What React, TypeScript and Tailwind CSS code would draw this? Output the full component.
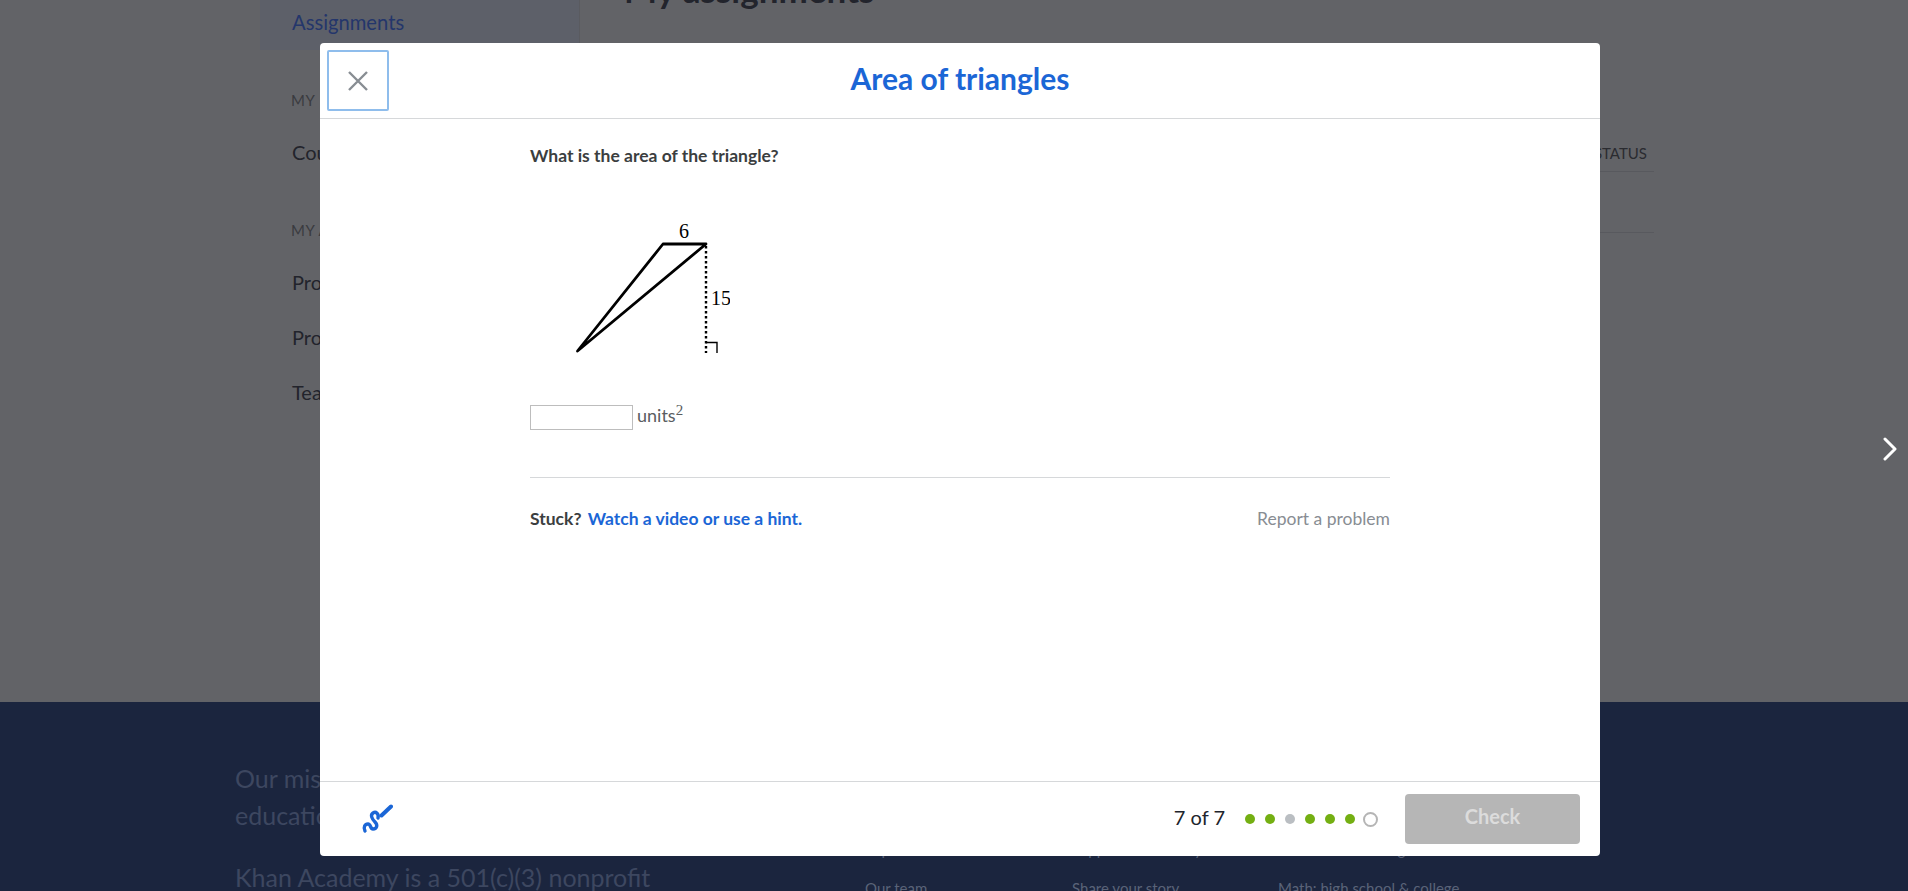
import React from "react";

const font = "font-['Lato','Liberation_Sans',sans-serif]";

const Triangle = () => (
	<svg width="200" height="160" viewBox="0 0 200 160" className="block">
		<path d="M47.5 141 L133 34 L176 34 Z" fill="none" stroke="#000" strokeWidth="2.8" strokeLinejoin="round" />
		<line x1="176" y1="36" x2="176" y2="143" stroke="#000" strokeWidth="2.4" strokeDasharray="2.4 2.6" />
		<path d="M176 132.5 H187 V143" fill="none" stroke="#000" strokeWidth="1.4" />
		<text x="154" y="28" fontSize="20" fontFamily="'Liberation Serif', serif" textAnchor="middle">6</text>
		<text x="181" y="95" fontSize="20" fontFamily="'Liberation Serif', serif">15</text>
	</svg>
);

const Scratchpad = () => (
	<svg width="32" height="32" viewBox="0 0 32 32" fill="none" className="block">
		<path d="M4 28 C2 24 4 21 7 21 C10 21 9 26 12 26 C16 26 17 22 14 19 C11 16 9 12 12 10 C15 8 18 11 17 15" stroke="#1b66d6" strokeWidth="3.4" strokeLinecap="round" strokeLinejoin="round" />
		<path d="M20.5 12.5 L30 3.5" stroke="#1b66d6" strokeWidth="4" strokeLinecap="round" />
	</svg>
);

const Dot = ({ color }: { color: string }) => <span className={`h-[10px] w-[10px] rounded-full ${color}`} />;

export default function App() {
	return (
		<div className={`relative h-[891px] w-[1908px] overflow-hidden bg-[#626367] ${font}`}>
			{/* Page behind the dialog */}
			<div className="flex h-[702px] pl-[260px]">
				<aside className="h-full w-[320px] border-r border-[#5a5b60]">
					<div className="flex h-[50px] items-start bg-[#5d6069] pl-[32px] pt-[9px] text-[20.2px] leading-[26px] text-[#24366b]">Assignments</div>
					<div className="mt-[40px] pl-[31px] text-[15px] leading-[20px] tracking-[0.5px] text-[#3a3b40]">MY</div>
					<div className="mt-[28px] pl-[32px] text-[20px] leading-[28px] text-[#22242c]">Courses</div>
					<div className="mt-[54px] pl-[31px] text-[15px] leading-[20px] tracking-[0.5px] text-[#3a3b40]">MY A</div>
					<div className="mt-[28px] pl-[32px] text-[20px] leading-[28px] text-[#22242c]">Profile</div>
					<div className="mt-[27px] pl-[32px] text-[20px] leading-[28px] text-[#22242c]">Progress</div>
					<div className="mt-[27px] pl-[32px] text-[20px] leading-[28px] text-[#22242c]">Teachers</div>
				</aside>
				<main className="flex-1 pl-[44px] pr-[254px]">
					<h1 className="-mt-[31px] text-[35px] font-bold leading-[40px] text-[#22242c]">My assignments</h1>
					<div className="mt-[125px] flex h-[38px] items-end justify-end border-b border-[#58595e] pb-[8px] pr-[7px] text-[15px] leading-[20px] text-[#2a2b30]">STATUS</div>
					<div className="h-[61px] border-b border-[#58595e]" />
				</main>
			</div>
			<footer className="h-[189px] bg-[#1b253e] pl-[235px] pt-[58px]">
				<div className="flex">
					<div className="w-[630px] text-[25px] leading-[37px] text-[#3d4760]">
						<p>Our mission is to provide a free, world-class</p>
						<p>education for anyone, anywhere.</p>
						<p className="mt-[25px]">Khan Academy is a 501(c)(3) nonprofit</p>
					</div>
					<div className="mt-[79px] grid grid-cols-[207px_206px_300px] gap-y-[19px] text-[15px] leading-[20px] text-[#5a6378]">
						<span>Impact</span>
						<span>Support community</span>
						<span>Math: Pre-K - 8th grade</span>
						<span>Our team</span>
						<span>Share your story</span>
						<span>Math: high school &amp; college</span>
					</div>
				</div>
			</footer>

			<button className="absolute left-[1882px] top-[437px] text-white" aria-label="Next">
				<svg width="16" height="24" viewBox="0 0 16 24" fill="none" className="block">
					<path d="M3 2 L13 12 L3 22" stroke="#fff" strokeWidth="3" strokeLinecap="round" strokeLinejoin="round" />
				</svg>
			</button>

			{/* Dialog */}
			<div className="absolute left-[320px] top-[43px] flex h-[813px] w-[1280px] flex-col overflow-hidden rounded-[4px] bg-white">
				<header className="relative flex h-[76px] flex-none items-center justify-center border-b border-[#d6d8da] pb-[5px]">
					<button className="absolute left-[7px] top-[7px] flex h-[61px] w-[62px] items-center justify-center rounded-[2px] border-2 border-[#8fbdec] text-[#888d93]" aria-label="Close">
						<svg width="22" height="22" viewBox="0 0 22 22" fill="none" className="block">
							<path d="M2 2 L20 20 M20 2 L2 20" stroke="currentColor" strokeWidth="2.4" />
						</svg>
					</button>
					<h2 className="text-[30px] font-bold text-[#1b66d6]">Area of triangles</h2>
				</header>
				<div className="flex-1 px-[210px] pt-[24px]">
					<p className="text-[17.5px] font-bold leading-[26px] text-[#3b3e40]">What is the area of the triangle?</p>
					<div className="mt-[41px]">
						<Triangle />
					</div>
					<div className="mt-[32px] flex items-start">
						<input className="mt-[3px] h-[25px] w-[103px] border border-[#bdbdbd] bg-white" readOnly />
						<span className="ml-[4px] text-[18px] leading-[26px] text-[#5a5d61]">
							units<sup className="font-['Liberation_Serif',serif] text-[15px]">2</sup>
						</span>
					</div>
					<div className="mt-[47px] border-t border-[#d6d8da]" />
					<div className="mt-[28px] flex items-center justify-between text-[17.5px] leading-[26px]">
						<p className="font-bold text-[#3b3e40]">
							Stuck? <a className="ml-[2px] text-[#1b66d6]">Watch a video or use a hint.</a>
						</p>
						<a className="text-[#888d93]">Report a problem</a>
					</div>
				</div>
				<footer className="flex h-[75px] flex-none items-center border-t border-[#d6d8da] pl-[41px] pr-[20px]">
					<Scratchpad />
					<span className="mb-[5px] ml-auto text-[20px] text-[#21242c]">7 of 7</span>
					<div className="ml-[20px] flex items-center gap-[10px]">
						<Dot color="bg-[#74af12]" />
						<Dot color="bg-[#74af12]" />
						<Dot color="bg-[#babec2]" />
						<Dot color="bg-[#74af12]" />
						<Dot color="bg-[#74af12]" />
						<Dot color="bg-[#74af12]" />
						<span className="-ml-[2px] h-[15px] w-[15px] rounded-full border-2 border-[#b5b5b5]" />
					</div>
					<button className="ml-[27px] h-[50px] w-[175px] rounded-[4px] bg-[#b6b6b6] pb-[6px] text-[20px] font-bold text-[#dcdcdc]">Check</button>
				</footer>
			</div>
		</div>
	);
}
